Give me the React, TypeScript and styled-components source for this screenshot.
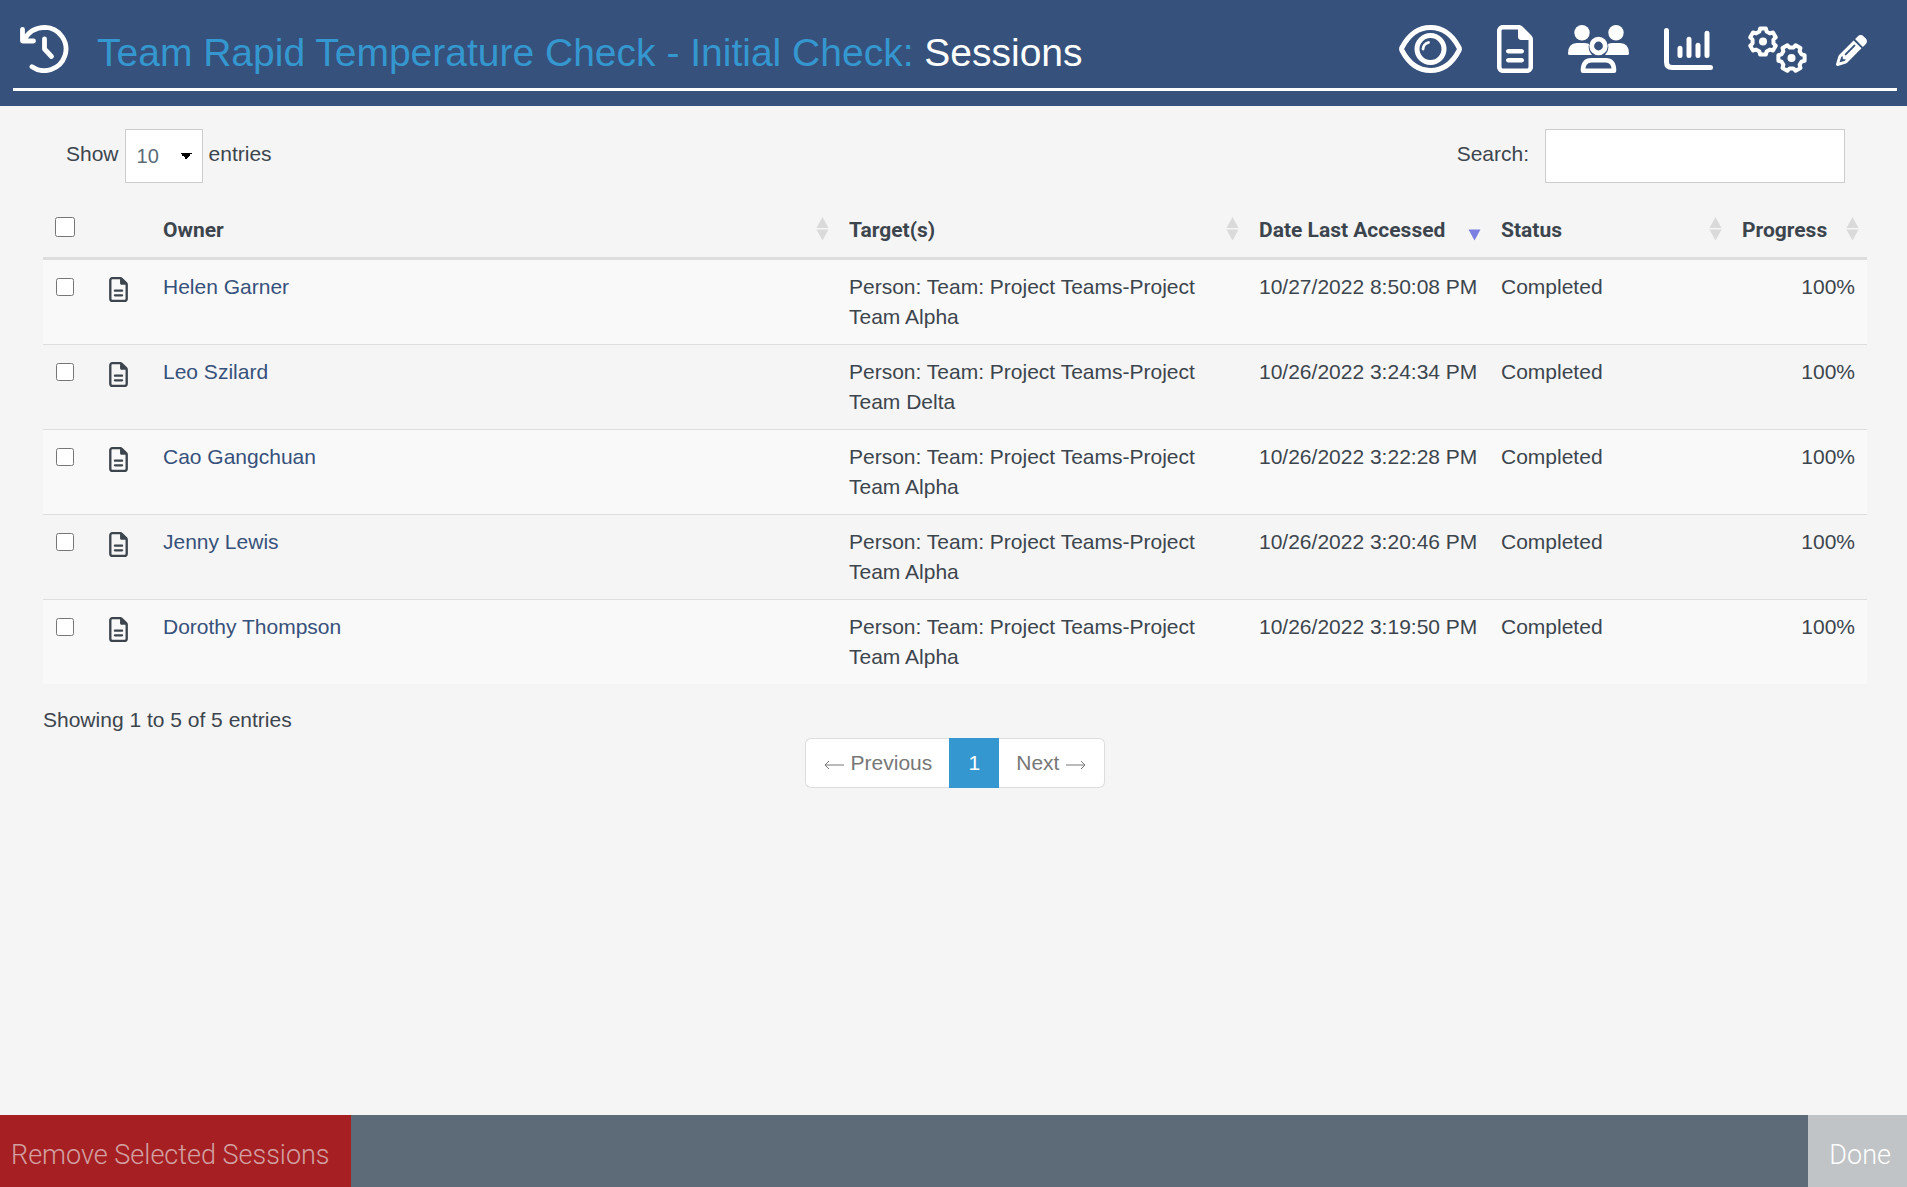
import React, { useState } from 'react';
import styled, { createGlobalStyle, css } from 'styled-components';
import { FaPencil, FaRegFileLines } from 'react-icons/fa6';

const Global = createGlobalStyle`
  *, *::before, *::after { box-sizing: border-box; }
  body {
    margin: 0;
    background: #f5f5f5;
    color: #3c454d;
    font: 21px/30px "Liberation Sans", Arial, sans-serif;
  }
  button, input, select { font: inherit; }
`;

const Page = styled.div`
  display: flex;
  flex-direction: column;
  min-height: 100vh;
`;

const Header = styled.header`
  background: #36517b;
  padding: 0 10px 15px 13px;
`;

const HeaderBar = styled.div`
  display: flex;
  align-items: center;
  height: 91px;
  padding: 0 30px 0 7px;
  border-bottom: 3px solid #fff;
  color: #fff;
`;

const Title = styled.h1`
  flex: 1;
  margin: 0;
  padding: 18px 0 0 28px;
  font-size: 39px;
  line-height: 48px;
  font-weight: 400;
  white-space: nowrap;
`;

const TitleLink = styled.a`
  color: #3597cf;
  text-decoration: none;
`;

const Nav = styled.nav`
  display: flex;
  align-items: center;
  gap: 35px;
  padding-top: 10px;
`;

const IconButton = styled.button`
  display: flex;
  padding: 0;
  border: 0;
  background: none;
  color: inherit;
  cursor: pointer;
`;

const EditButton = styled(IconButton)`
  margin-left: -6px;
  padding-top: 3px;
`;

const HistoryMark = styled.span`
  display: flex;
  padding-top: 10px;
`;

const FileIcon = styled(FaRegFileLines)<{ $height: number }>`
  width: ${p => Math.ceil(p.$height * 0.75)}px;
  height: ${p => p.$height}px;
`;

const Main = styled.main`
  flex: 1;
  padding: 23px 40px 40px 43px;
`;

const Controls = styled.div`
  display: flex;
  justify-content: space-between;
  align-items: center;
  padding: 0 22px 0 23px;
`;

const Field = styled.label<{ $gap: number }>`
  display: flex;
  align-items: center;
  gap: ${p => p.$gap}px;
`;

const FieldText = styled.span`
  padding-bottom: 4px;
`;

const fieldBox = css`
  height: 54px;
  border: 1px solid #ccc;
  border-radius: 0;
  background-color: #fff;
  color: #5d6b78;
  font-size: 20px;
`;

const LengthSelect = styled.select`
  ${fieldBox}
  width: 78px;
  padding: 0 11px;
  appearance: none;
  background-image: linear-gradient(45deg, transparent 50%, #000 50%),
    linear-gradient(135deg, #000 50%, transparent 50%);
  background-size: 6px 6px;
  background-position: right 16px center, right 10px center;
  background-repeat: no-repeat;
`;

const SearchInput = styled.input`
  ${fieldBox}
  width: 300px;
  padding: 0 12px;
`;

const Table = styled.table`
  width: 100%;
  margin-top: 17px;
  border-collapse: separate;
  border-spacing: 0;
  table-layout: fixed;
`;

const Col = styled.col<{ $w?: number }>`
  width: ${p => (p.$w ? `${p.$w}px` : 'auto')};
`;

const Th = styled.th`
  height: 60px;
  padding: 0 8px 0 12px;
  border-bottom: 3px solid #ddd;
  font-family: Roboto, sans-serif;
  font-weight: 700;
  text-align: left;
`;

const SortButton = styled.button`
  display: flex;
  align-items: center;
  justify-content: space-between;
  width: 100%;
  padding: 0;
  border: 0;
  background: none;
  color: inherit;
  font-weight: 700;
  white-space: nowrap;
  cursor: pointer;
`;

const SortLabel = styled.span`
  padding-top: 2px;
`;

const Row = styled.tr`
  &:nth-child(odd) { background: #f9f9f9; }
  & + & > td { border-top: 1px solid #ddd; }
`;

const Td = styled.td<{ $right?: boolean; $nowrap?: boolean }>`
  padding: 12px;
  vertical-align: top;
  text-align: ${p => (p.$right ? 'right' : 'left')};
  white-space: ${p => (p.$nowrap ? 'nowrap' : 'normal')};
`;

const Check = styled.input<{ $size: number }>`
  display: block;
  width: ${p => p.$size}px;
  height: ${p => p.$size}px;
  margin: 6px 1px;
`;

const HeadCheck = styled(Check)`
  margin: 0 0 4px;
`;

const ReportButton = styled(IconButton)`
  margin: 5px 0 0 2px;
`;

const OwnerLink = styled.a`
  color: #36517b;
  text-decoration: none;
`;

const Info = styled.p`
  margin: 21px 0 3px;
`;

const Pager = styled.nav`
  display: flex;
  justify-content: center;
`;

const PageButton = styled.button<{ $active?: boolean }>`
  display: flex;
  align-items: center;
  justify-content: center;
  gap: 6px;
  height: 50px;
  padding: 0 17px;
  border: 1px solid #ddd;
  background: #fff;
  color: #777;
  &:first-child { border-radius: 6px 0 0 6px; border-right: 0; }
  &:last-child { border-radius: 0 6px 6px 0; border-left: 0; }
  ${p => p.$active && css`
    width: 50px;
    border-color: #3597cf;
    background: #3597cf;
    color: #fff;
  `}
`;

const ArrowIcon = styled.svg`
  width: 22px;
  height: 10px;
  margin-top: 3px;
  fill: none;
  stroke: currentColor;
`;

const Footer = styled.footer`
  position: sticky;
  bottom: 0;
  display: flex;
  justify-content: space-between;
  height: 72px;
  background: #5d6b78;
`;

const FooterButton = styled.button<{ $danger?: boolean }>`
  padding: ${p => (p.$danger ? '8px 21px 0 11px' : '8px 16px 0 21px')};
  border: 0;
  background: ${p => (p.$danger ? '#a62023' : '#c0c4c7')};
  color: ${p => (p.$danger ? '#d2a0a2' : '#fff')};
  font: 300 27px/32px Roboto, sans-serif;
`;

const HistoryIcon = () => (
  <svg width="49" height="48" viewBox="0 0 49 48" fill="none" stroke="currentColor" strokeWidth="4.8" strokeLinecap="round" strokeLinejoin="round">
    <path d="M2.500 4.500V16H13.500" />
    <path d="M3.500 15.500C8 7.500 15.500 2.400 25 2.400A21.600 21.600 0 1 1 12 41.700" />
    <path d="M24.500 14V24L31.500 31.500" />
  </svg>
);

const EyeIcon = () => (
  <svg width="63" height="48" viewBox="0 0 63 48" fill="none" stroke="currentColor" strokeWidth="5">
    <path d="M3 22.500C8.500 12 18 2.500 31.500 2.500S54.500 12 60 22.500Q60.800 24 60 25.500C54.500 36 45 45.500 31.500 45.500S8.500 36 3 25.500Q2.200 24 3 22.500Z" />
    <circle cx="31.500" cy="24" r="13.500" />
    <path d="M24 24A7.500 7.500 0 0 1 29.500 17.500" strokeWidth="2.8" strokeLinecap="round" />
  </svg>
);

const PeopleIcon = () => (
  <svg width="61" height="48" viewBox="0 0 61 48" fill="currentColor">
    <circle cx="14" cy="7.700" r="7.700" />
    <circle cx="48" cy="7.700" r="7.700" />
    <path d="M9 18H16Q19 18 21 19Q19.500 25 24 30H1.500Q0 30 0 28.500Q0 18 9 18Z" />
    <path d="M52 18H45Q42 18 40 19Q41.500 25 37 30H59.500Q61 30 61 28.500Q61 18 52 18Z" />
    <circle cx="30.500" cy="21" r="6.800" fill="none" stroke="currentColor" strokeWidth="4.8" />
    <path d="M23.500 35.300H37.500Q46 35.300 46 45.700H15Q15 35.300 23.500 35.300Z" fill="none" stroke="currentColor" strokeWidth="4.6" strokeLinejoin="round" />
  </svg>
);

const ChartIcon = () => (
  <svg width="49" height="42" viewBox="0 0 49 42" fill="none" stroke="currentColor" strokeWidth="5" strokeLinecap="round">
    <path d="M2.500 2.500V34Q2.500 39.500 8 39.500H46.500M16 20.300V27.500M25 11.300V27.500M34 17.300V27.500M43 5.300V27.500" />
  </svg>
);

const gearPath = (cx: number, cy: number, turn: number) => {
  const points: string[] = [];
  for (let tooth = 0; tooth < 6; tooth++) {
    const mid = tooth * 60 + turn;
    [[-20, 10.6], [-12, 13.4], [12, 13.4], [20, 10.6]].forEach(([offset, radius]) => {
      const a = ((mid + offset) * Math.PI) / 180;
      points.push(`${(cx + radius * Math.cos(a)).toFixed(2)} ${(cy + radius * Math.sin(a)).toFixed(2)}`);
    });
  }
  return `M${points.join('L')}Z`;
};

const GearsIcon = () => (
  <svg width="59" height="48" viewBox="0 0 59 48" fill="none" stroke="currentColor" strokeWidth="4" strokeLinejoin="round">
    <path d={gearPath(15, 16.5, 30)} />
    <path d={gearPath(43.5, 33, 0)} />
    <circle cx="15" cy="16.500" r="4" fill="currentColor" stroke="none" />
    <circle cx="43.500" cy="33" r="4" fill="currentColor" stroke="none" />
  </svg>
);

const SortIcon = ({ dir }: { dir?: 'desc' }) => (
  <svg width="13" height="24" viewBox="0 0 13 24" fill={dir ? '#7b80e0' : '#dadada'}>
    {!dir && <path d="M6.500 0L12.500 11H.5Z" />}
    <path d="M.5 12.500H12.500L6.500 23.500Z" />
  </svg>
);

const columns: { name: string; dir?: 'desc' }[] = [
  { name: 'Owner' },
  { name: 'Target(s)' },
  { name: 'Date Last Accessed', dir: 'desc' },
  { name: 'Status' },
  { name: 'Progress' },
];

const sessions = [
  { owner: 'Helen Garner', team: 'Alpha', date: '10/27/2022 8:50:08 PM' },
  { owner: 'Leo Szilard', team: 'Delta', date: '10/26/2022 3:24:34 PM' },
  { owner: 'Cao Gangchuan', team: 'Alpha', date: '10/26/2022 3:22:28 PM' },
  { owner: 'Jenny Lewis', team: 'Alpha', date: '10/26/2022 3:20:46 PM' },
  { owner: 'Dorothy Thompson', team: 'Alpha', date: '10/26/2022 3:19:50 PM' },
];

export default function App() {
  const [query, setQuery] = useState('');
  const shown = sessions.filter(s => s.owner.toLowerCase().includes(query.toLowerCase()));

  return (
    <Page>
      <Global />
      <Header>
        <HeaderBar>
          <HistoryMark><HistoryIcon /></HistoryMark>
          <Title>
            <TitleLink href="#check">Team Rapid Temperature Check - Initial Check:</TitleLink> Sessions
          </Title>
          <Nav aria-label="Assessment">
            <IconButton aria-label="Preview"><EyeIcon /></IconButton>
            <IconButton aria-label="Report"><FileIcon $height={48} /></IconButton>
            <IconButton aria-label="Participants"><PeopleIcon /></IconButton>
            <IconButton aria-label="Results"><ChartIcon /></IconButton>
            <IconButton aria-label="Settings"><GearsIcon /></IconButton>
            <EditButton aria-label="Edit"><FaPencil size={31} /></EditButton>
          </Nav>
        </HeaderBar>
      </Header>
      <Main>
        <Controls>
          <Field $gap={6}>
            <FieldText>Show</FieldText>
            <LengthSelect defaultValue="10">
              <option>10</option>
              <option>25</option>
              <option>50</option>
            </LengthSelect>
            <FieldText>entries</FieldText>
          </Field>
          <Field $gap={16}>
            <FieldText>Search:</FieldText>
            <SearchInput type="search" value={query} onChange={e => setQuery(e.target.value)} />
          </Field>
        </Controls>
        <Table>
          <colgroup>
            <Col $w={52} /><Col $w={56} /><Col /><Col $w={410} /><Col $w={242} /><Col $w={241} /><Col $w={137} />
          </colgroup>
          <thead>
            <tr>
              <Th><HeadCheck $size={20} type="checkbox" aria-label="Select all sessions" /></Th>
              <Th />
              {columns.map(c => (
                <Th key={c.name} aria-sort={c.dir ? 'descending' : undefined}>
                  <SortButton><SortLabel>{c.name}</SortLabel><SortIcon dir={c.dir} /></SortButton>
                </Th>
              ))}
            </tr>
          </thead>
          <tbody>
            {shown.map(s => (
              <Row key={s.owner}>
                <Td><Check $size={18} type="checkbox" aria-label={`Select ${s.owner}`} /></Td>
                <Td><ReportButton aria-label={`Report for ${s.owner}`}><FileIcon $height={25} /></ReportButton></Td>
                <Td><OwnerLink href="#session">{s.owner}</OwnerLink></Td>
                <Td>{`Person: Team: Project Teams-Project Team ${s.team}`}</Td>
                <Td $nowrap>{s.date}</Td>
                <Td>Completed</Td>
                <Td $right>100%</Td>
              </Row>
            ))}
          </tbody>
        </Table>
        <Info>Showing 1 to 5 of 5 entries</Info>
        <Pager aria-label="Pagination">
          <PageButton>
            <ArrowIcon viewBox="0 0 22 10"><path d="M21 5H2M6 1L2 5L6 9" /></ArrowIcon>
            Previous
          </PageButton>
          <PageButton $active aria-current="page">1</PageButton>
          <PageButton>
            Next
            <ArrowIcon viewBox="0 0 22 10"><path d="M1 5H20M16 1L20 5L16 9" /></ArrowIcon>
          </PageButton>
        </Pager>
      </Main>
      <Footer>
        <FooterButton $danger>Remove Selected Sessions</FooterButton>
        <FooterButton>Done</FooterButton>
      </Footer>
    </Page>
  );
}
